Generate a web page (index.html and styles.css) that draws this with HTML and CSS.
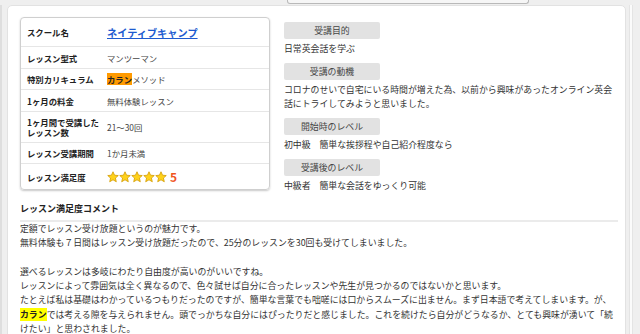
FILE: index.html
```html
<!DOCTYPE html>
<html lang="ja">
<head>
<meta charset="utf-8">
<title>ネイティブキャンプ 口コミ</title>
<link rel="stylesheet" href="styles.css">
</head>
<body>

<div class="topbar"><div class="tab"></div></div>

<div class="page">
  <div class="edge"></div>

  <div class="panel">
    <div class="summary">

      <div class="spec">
        <div class="row row-school">
          <div class="label">スクール名</div>
          <div class="value"><a class="school-link" href="#">ネイティブキャンプ</a></div>
        </div>
        <div class="row">
          <div class="label">レッスン型式</div>
          <div class="value">マンツーマン</div>
        </div>
        <div class="row row-short">
          <div class="label">特別カリキュラム</div>
          <div class="value"><span class="mark-orange">カラン</span>メソッド</div>
        </div>
        <div class="row">
          <div class="label">1ヶ月の料金</div>
          <div class="value">無料体験レッスン</div>
        </div>
        <div class="row row-tall">
          <div class="label">1ヶ月間で受講した<br>レッスン数</div>
          <div class="value">21～30回</div>
        </div>
        <div class="row row-short">
          <div class="label">レッスン受講期間</div>
          <div class="value">1か月未満</div>
        </div>
        <div class="row row-rating">
          <div class="label">レッスン満足度</div>
          <div class="value">
            <span class="stars">
              <svg class="star" viewBox="0 0 24 24"><path d="M12 1.5l3.1 6.9 7.4.7-5.6 5 1.7 7.4L12 17.6l-6.6 3.9 1.7-7.4-5.6-5 7.4-.7z"/></svg>
              <svg class="star" viewBox="0 0 24 24"><path d="M12 1.5l3.1 6.9 7.4.7-5.6 5 1.7 7.4L12 17.6l-6.6 3.9 1.7-7.4-5.6-5 7.4-.7z"/></svg>
              <svg class="star" viewBox="0 0 24 24"><path d="M12 1.5l3.1 6.9 7.4.7-5.6 5 1.7 7.4L12 17.6l-6.6 3.9 1.7-7.4-5.6-5 7.4-.7z"/></svg>
              <svg class="star" viewBox="0 0 24 24"><path d="M12 1.5l3.1 6.9 7.4.7-5.6 5 1.7 7.4L12 17.6l-6.6 3.9 1.7-7.4-5.6-5 7.4-.7z"/></svg>
              <svg class="star" viewBox="0 0 24 24"><path d="M12 1.5l3.1 6.9 7.4.7-5.6 5 1.7 7.4L12 17.6l-6.6 3.9 1.7-7.4-5.6-5 7.4-.7z"/></svg>
            </span>
            <span class="score">5</span>
          </div>
        </div>
      </div>

      <div class="details">
        <div class="tag">受講目的</div>
        <p class="answer">日常英会話を学ぶ</p>
        <div class="tag">受講の動機</div>
        <p class="answer">コロナのせいで自宅にいる時間が増えた為、以前から興味があったオンライン英会話にトライしてみようと思いました。</p>
        <div class="tag">開始時のレベル</div>
        <p class="answer">初中級　簡単な挨拶程や自己紹介程度なら</p>
        <div class="tag">受講後のレベル</div>
        <p class="answer">中級者　簡単な会話をゆっくり可能</p>
      </div>

    </div>

    <div class="comment">
      <h3 class="comment-title">レッスン満足度コメント</h3>
      <p class="comment-body">定額でレッスン受け放題というのが魅力です。<br>無料体験も７日間はレッスン受け放題だったので、25分のレッスンを30回も受けてしまいました。<br><br>選べるレッスンは多岐にわたり自由度が高いのがいいですね。<br>レッスンによって雰囲気は全く異なるので、色々試せば自分に合ったレッスンや先生が見つかるのではないかと思います。<br>たとえば私は基礎はわかっているつもりだったのですが、簡単な言葉でも咄嗟には口からスムーズに出ません。まず日本語で考えてしまいます。が、<span class="mark-yellow">カラン</span>では考える隙を与えられません。頭でっかちな自分にはぴったりだと感じました。これを続けたら自分がどうなるか、とても興味が湧いて「続けたい」と思わされました。</p>
    </div>
  </div>

  <div class="rail"></div>
</div>

</body>
</html>
```

FILE: styles.css
```css
html, body { margin: 0; padding: 0; }
body {
  background: #efefef;
  color: #333;
  font-family: "Noto Sans CJK JP", "Noto Sans", sans-serif;
  overflow: hidden;
  height: 334px;
}

.topbar { height: 4px; }
.tab {
  margin-left: 287px;
  width: 240px;
  height: 3px;
  background: #f6f6f6;
  border: 1px solid #b9b9b9;
  border-top: none;
  border-radius: 0 0 3px 3px;
}

.page { display: flex; margin-top: 1px; }
.edge { width: 2px; background: #dedede; margin-right: 5px; }
.panel {
  width: 619px;
  height: 360px;
  background: #fff;
  border: 1px solid #e2e2e2;
  border-radius: 5px 5px 0 0;
  padding: 11px 7px 0 12px;
  box-sizing: border-box;
}
.rail {
  width: 2px;
  margin-left: 3px;
  background: #fbfbfb;
  border-left: 1px solid #e4e4e4;
  border-right: 1px solid #e4e4e4;
}

/* summary: spec table + answers */
.summary { display: flex; align-items: flex-start; }

.spec {
  width: 250px;
  box-sizing: border-box;
  border: 1px solid #cfcfcf;
  border-radius: 4px;
  box-shadow: 0 1px 2px rgba(0,0,0,0.22);
  font-size: 8.4px;
}
.row {
  display: flex;
  align-items: center;
  height: 22px;
  border-top: 1px solid #e6e6e6;
  box-sizing: border-box;
}
.row-school { height: 28px; border-top: none; }
.row-short { height: 21px; }
.row-tall { height: 31px; }
.row-rating { height: 26px; }
.label {
  width: 86px;
  flex: none;
  padding-left: 6px;
  box-sizing: border-box;
  font-weight: bold;
  color: #222;
  line-height: 10px;
  white-space: nowrap;
}
.value { color: #444; display: flex; align-items: center; }
.school-link {
  color: #1d5bd0;
  font-size: 10.2px;
  font-weight: bold;
  text-decoration: underline;
}
.mark-orange { background: #ff9a00; color: #222; font-weight: bold; }

.stars { display: flex; }
.star {
  width: 12px;
  height: 12px;
  fill: #ffd21a;
  stroke: #d39a00;
  stroke-width: 1.6;
  stroke-linejoin: round;
}
.score {
  color: #f0561e;
  font-weight: bold;
  font-size: 12px;
  margin-left: 3px;
}

.details {
  width: 334px;
  margin-left: 14px;
  margin-top: 5px;
  font-size: 8.9px;
}
.tag {
  width: 96px;
  height: 17px;
  line-height: 17px;
  text-align: center;
  background: #e2e2e2;
  color: #444;
  border-radius: 2px;
}
.answer {
  margin: 3px 0 7px;
  line-height: 14px;
  color: #333;
}
.answer:last-child { margin-bottom: 0; }

/* comment */
.comment { margin-top: 9px; }
.comment-title {
  margin: 0;
  font-size: 9px;
  line-height: 14px;
  color: #222;
  padding-bottom: 4px;
  border-bottom: 2px solid #ebebeb;
}
.comment-body {
  margin: 0;
  font-size: 8.9px;
  line-height: 14.3px;
  color: #333;
}
.mark-yellow { background: #ffff00; font-weight: bold; color: #222; }
```
